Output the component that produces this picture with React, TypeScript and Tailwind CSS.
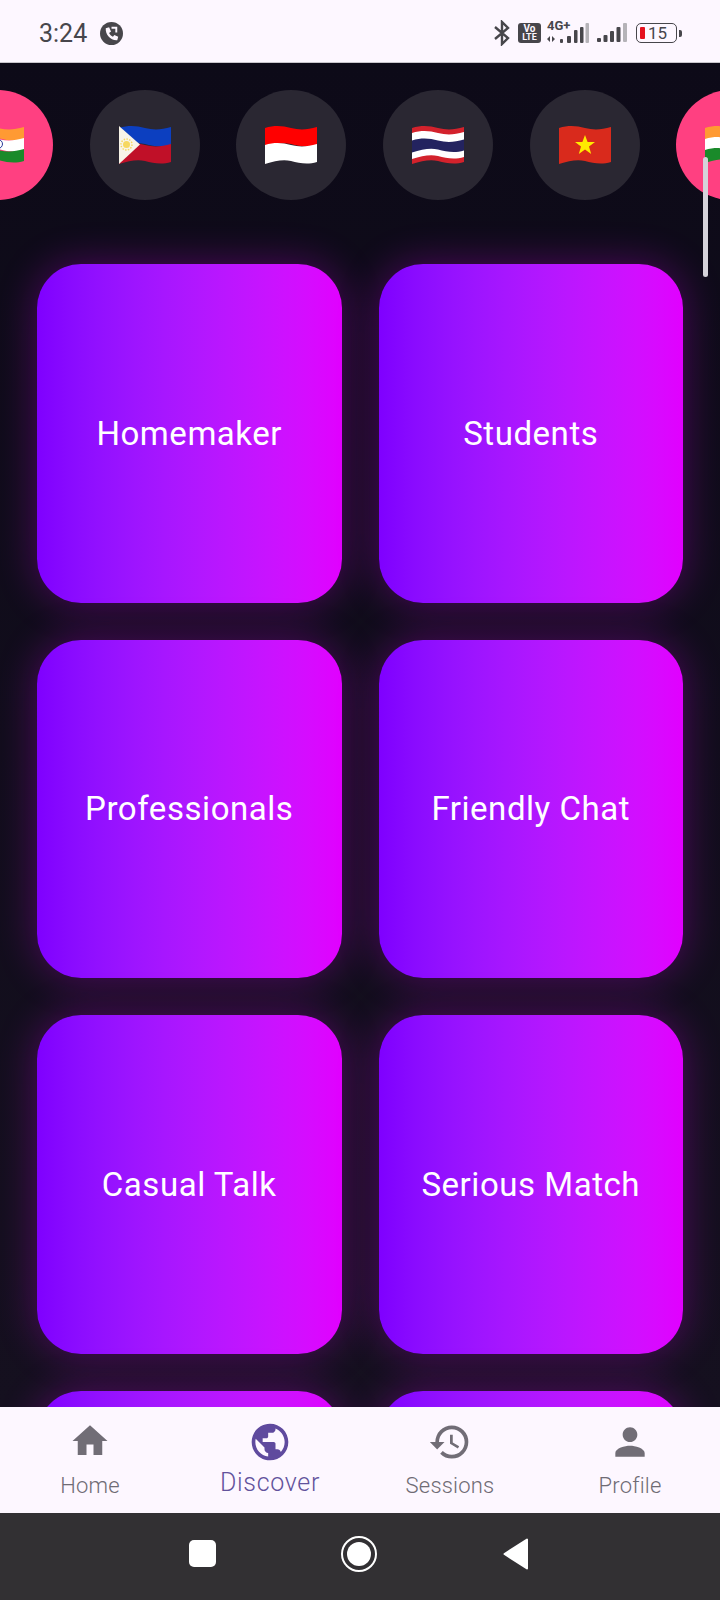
import { MdHistory, MdHome, MdPerson, MdPublic } from "react-icons/md";

const cards = [
  "Homemaker",
  "Students",
  "Professionals",
  "Friendly Chat",
  "Casual Talk",
  "Serious Match",
  "",
  "",
];

// wavy stripe between two heights of the flag
const band = (a: number, b: number) =>
  `M0 ${a + 1} C10 ${a - 2} 18 ${a - 1} 26 ${a + 1} S42 ${a + 3} 52 ${a} L52 ${b} C42 ${b + 3} 34 ${b + 1} 26 ${b - 1} S10 ${b - 1} 0 ${b + 2} Z`;

const Flag = ({ code }: { code: string }) => (
  <svg width="52" height="40" viewBox="0 0 52 40">
    {code === "in" && (
      <>
        <path d={band(2, 14)} fill="#ff9a33" />
        <path d={band(13, 25)} fill="#ffffff" />
        <path d={band(24, 36)} fill="#1a8a2a" />
        <circle cx="26" cy="19" r="4.5" fill="none" stroke="#2a3a9a" strokeWidth="1" />
      </>
    )}
    {code === "ph" && (
      <>
        <path d={band(2, 20)} fill="#0c3fc0" />
        <path d={band(19, 37)} fill="#c01028" />
        <path d="M0 1 L21 19.5 L0 39 Z" fill="#f8f4e8" />
        <circle cx="7.5" cy="19.5" r="3.5" fill="#f6d860" />
        <circle cx="7.5" cy="19.5" r="5.5" fill="none" stroke="#f6d860" strokeWidth="1.5" strokeDasharray="1.4 1.4" />
      </>
    )}
    {code === "id" && (
      <>
        <path d={band(2, 20)} fill="#ff0000" />
        <path d={band(19, 37)} fill="#ffffff" />
      </>
    )}
    {code === "th" && (
      <>
        <path d={band(2, 37)} fill="#d3222c" />
        <path d={band(7, 32)} fill="#ffffff" />
        <path d={band(14.5, 25.5)} fill="#23235f" />
      </>
    )}
    {code === "vn" && (
      <>
        <path d={band(2, 37)} fill="#d92a1c" />
        <path
          d="M26 10 L28.6 17 L36 17 L30 21.6 L32.2 29 L26 24.6 L19.8 29 L22 21.6 L16 17 L23.4 17 Z"
          fill="#ffeb00"
        />
      </>
    )}
  </svg>
);

const flags = [
  { code: "in", active: true },
  { code: "ph", active: false },
  { code: "id", active: false },
  { code: "th", active: false },
  { code: "vn", active: false },
  { code: "in", active: true },
];

const StatusBar = () => (
  <div className="flex h-[63px] shrink-0 items-center justify-between border-b border-[#c9c6cc] bg-[#fdf7ff] pl-[39px] pr-[38px] pt-[4px]">
    <div className="flex items-center gap-[13px]">
      <span className="text-[25px] leading-none text-[#47464b]">3:24</span>
      <svg width="23" height="23" viewBox="0 0 24 24">
        <circle cx="12" cy="12" r="12" fill="#47464b" />
        <path
          d="M6 6.5 L9.5 5.5 L11.5 10 L9.5 11.5 C10.5 13.5 11.5 14.5 13.5 15.5 L15 13.5 L19 15.5 L18 19 C11 19.5 5.5 13 6 6.5 Z"
          fill="#fdf7ff"
        />
        <path d="M12 5 H18 V11 H16 V7 H12 Z" fill="#fdf7ff" />
      </svg>
    </div>
    <div className="flex items-center">
      <svg width="18" height="26" viewBox="0 0 18 26" className="mr-[7px]">
        <path
          d="M2 7 L15 18 L9 24 V2 L15 8 L2 19"
          fill="none"
          stroke="#47464b"
          strokeWidth="2.4"
        />
      </svg>
      <div className="mr-[6px] flex h-[20px] w-[23px] flex-col items-center justify-center rounded-[3px] bg-[#47464b] text-[10px] font-bold leading-[9px] text-[#fdf7ff]">
        <span>Vo</span>
        <span className="text-[9px]">LTE</span>
      </div>
      <div className="relative mr-[8px] h-[21px] w-[42px]">
        <span className="absolute left-0 top-[-3px] text-[13px] font-bold leading-[12px] text-[#47464b]">
          4G+
        </span>
        <svg width="42" height="21" viewBox="0 0 42 21">
          <path d="M3 13 L0 16 L3 19 Z M5 13 L8 16 L5 19 Z" fill="#47464b" />
          <rect x="13" y="16" width="3" height="4" rx="1" fill="#47464b" />
          <rect x="20" y="13" width="4" height="7" rx="1" fill="#47464b" />
          <rect x="27" y="7" width="3.5" height="13" rx="1" fill="#47464b" />
          <rect x="33" y="4" width="3.5" height="16" rx="1" fill="#47464b" />
          <rect x="38.5" y="0" width="3.5" height="20" rx="1" fill="#b5b3b8" />
        </svg>
      </div>
      <svg width="30" height="20" viewBox="0 0 30 20" className="mr-[9px]">
        <rect x="0" y="15" width="4" height="4" rx="1" fill="#47464b" />
        <rect x="6.5" y="12" width="4" height="7" rx="1" fill="#47464b" />
        <rect x="13" y="8" width="4" height="11" rx="1" fill="#47464b" />
        <rect x="19.5" y="4" width="4" height="15" rx="1" fill="#47464b" />
        <rect x="26" y="0" width="4" height="19" rx="1" fill="#b5b3b8" />
      </svg>
      <div className="flex items-center">
        <div className="flex h-[20px] w-[41px] items-center rounded-[5px] border-[1.5px] border-[#47464b] pl-[3px]">
          <div className="h-[12px] w-[5px] rounded-[1px] bg-[#e5101e]" />
          <span className="ml-[3px] text-[17px] leading-none text-[#47464b]">15</span>
        </div>
        <div className="ml-[2px] h-[7px] w-[3px] rounded-r-[2px] bg-[#47464b]" />
      </div>
    </div>
  </div>
);

const NavItem = ({
  label,
  icon,
  active,
}: {
  label: string;
  icon: React.ReactNode;
  active?: boolean;
}) => (
  <div className="flex flex-col items-center pt-[13px]">
    <div className={`h-[44px] ${active ? "text-[#5f4a9e]" : "text-[#716d76]"}`}>{icon}</div>
    {active ? (
      <span className="mt-[4px] text-[25px] font-light leading-[30px] tracking-[0.7px] text-[#62529c]">
        {label}
      </span>
    ) : (
      <span className="mt-[7px] text-[22px] font-light leading-[30px] tracking-[0.2px] text-[#6f6b74]">
        {label}
      </span>
    )}
  </div>
);

export default function App() {
  return (
    <div className="flex h-[1600px] w-[720px] flex-col overflow-hidden bg-[#0d0a17] font-['Roboto',sans-serif]">
      <StatusBar />

      <div className="relative min-h-0 flex-1 overflow-hidden bg-gradient-to-b from-[#0d0a18] to-[#15101f]">
        <div className="-ml-[57px] flex gap-[36.7px] pt-[27px]">
          {flags.map((f, i) => (
            <div
              key={i}
              className={`flex h-[110px] w-[110px] shrink-0 items-center justify-center rounded-full ${
                f.active ? "bg-[#ff4081]" : "bg-[#2a2732]"
              }`}
            >
              <Flag code={f.code} />
            </div>
          ))}
        </div>

        <div className="grid grid-cols-2 gap-[37px] px-[37px] pt-[64px]">
          {cards.map((c, i) => (
            <div
              key={i}
              className="flex h-[338.5px] items-center justify-center rounded-[44px] bg-gradient-to-r from-[#7f00ff] to-[#e100ff] text-[33px] tracking-[0.55px] text-white shadow-[0_0_40px_rgba(225,0,255,0.3)]"
            >
              {c}
            </div>
          ))}
        </div>

        <div className="absolute right-[12px] top-[94px] h-[120px] w-[5px] rounded-full bg-[#d5d2da]" />
      </div>

      <div className="relative grid h-[106px] shrink-0 grid-cols-4 bg-[#fdf7ff]">
        <NavItem label="Home" icon={<MdHome size={42} />} />
        <NavItem label="Discover" icon={<MdPublic size={44} />} active />
        <NavItem label="Sessions" icon={<MdHistory size={44} />} />
        <NavItem label="Profile" icon={<MdPerson size={44} />} />
      </div>

      <div className="flex h-[87px] shrink-0 items-center bg-[#323033] pb-[6px] pl-[189px]">
        <div className="h-[27px] w-[27px] rounded-[5px] bg-white" />
        <div className="ml-[125px] flex h-[36px] w-[36px] items-center justify-center rounded-full border-[2.5px] border-white">
          <div className="h-[24px] w-[24px] rounded-full bg-white" />
        </div>
        <svg width="26" height="32" viewBox="0 0 26 32" className="ml-[126px]">
          <path d="M24 1.5 V30.5 L1.5 16 Z" fill="#fff" stroke="#fff" strokeWidth="2" strokeLinejoin="round" />
        </svg>
      </div>
    </div>
  );
}
